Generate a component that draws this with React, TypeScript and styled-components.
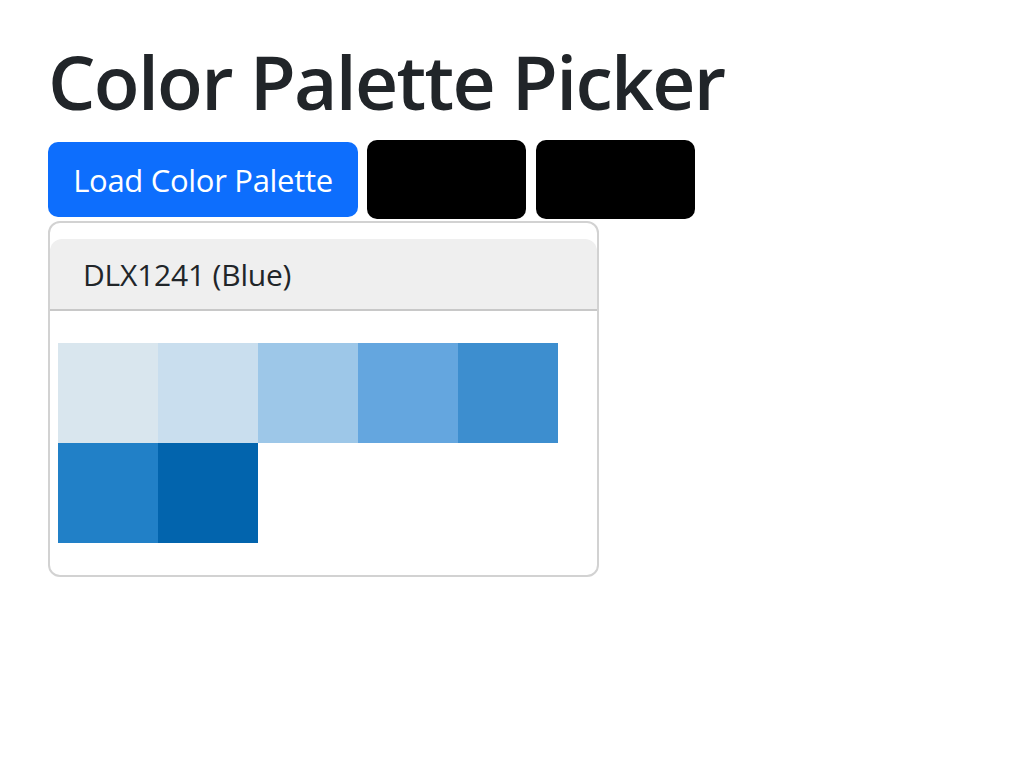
import React from 'react';
import styled, { createGlobalStyle } from 'styled-components';

const palette = {
  name: 'DLX1241 (Blue)',
  colors: ['#d9e6ee', '#c9deee', '#9dc7e8', '#64a6df', '#3d8ecf', '#2180c7', '#0264ad'],
};

const GlobalStyle = createGlobalStyle`
  body {
    margin: 0;
    background: #ffffff;
    color: #212529;
    font-family: 'Open Sans', 'Noto Sans', sans-serif;
  }
`;

const Page = styled.div`
  padding: 36px 48px;
`;

const Title = styled.h1`
  margin: 0 0 14px 0;
  font-size: 75px;
  font-weight: 600;
  line-height: 1.2;
  letter-spacing: -1.7px;
  color: #212529;
`;

const Toolbar = styled.div`
  display: flex;
  align-items: center;
  gap: 9px;
`;

const LoadButton = styled.button`
  width: 310px;
  height: 75px;
  border: none;
  border-radius: 10px;
  background: #0d6efd;
  color: #ffffff;
  font-family: inherit;
  font-size: 31px;
  letter-spacing: -0.3px;
  cursor: pointer;
`;

const Swatch = styled.button<{ $color: string }>`
  width: 159px;
  height: 79px;
  border: none;
  border-radius: 10px;
  background: ${(p) => p.$color};
  padding: 0;

  & + & {
    margin-left: 1px;
  }
`;

const Card = styled.div`
  width: 551px;
  box-sizing: border-box;
  margin-top: 2px;
  padding-top: 16px;
  border: 2px solid #d2d2d2;
  border-radius: 12px;
`;

const CardHeader = styled.div`
  height: 70px;
  display: flex;
  align-items: center;
  padding-left: 33px;
  background: #efefef;
  border-radius: 12px 12px 0 0;
  border-bottom: 2px solid #c8c8c8;
  font-size: 30px;
  font-weight: 500;
  letter-spacing: -0.2px;
  color: #212529;
`;

const CardBody = styled.div`
  display: flex;
  flex-wrap: wrap;
  padding: 32px 8px;
`;

const Cell = styled.div<{ $color: string }>`
  width: 100px;
  height: 100px;
  background: ${(p) => p.$color};
`;

export default function App() {
  return (
    <Page>
      <GlobalStyle />
      <Title>Color Palette Picker</Title>
      <Toolbar>
        <LoadButton>Load Color Palette</LoadButton>
        <Swatch $color="#000000" />
        <Swatch $color="#000000" />
      </Toolbar>
      <Card>
        <CardHeader>{palette.name}</CardHeader>
        <CardBody>
          {palette.colors.map((c) => (
            <Cell key={c} $color={c} />
          ))}
        </CardBody>
      </Card>
    </Page>
  );
}
